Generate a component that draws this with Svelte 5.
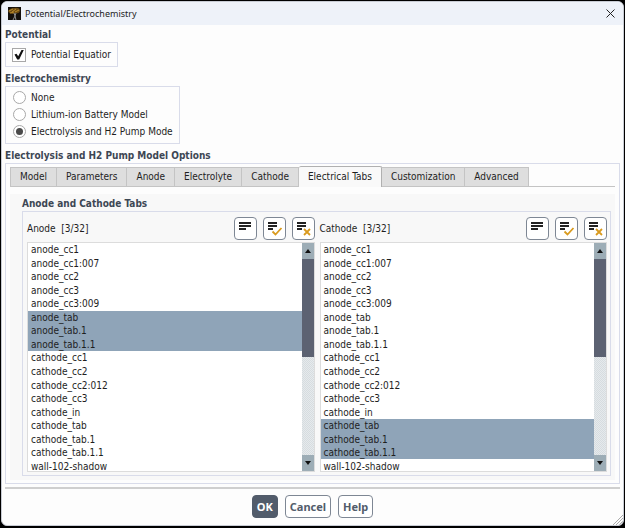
<script>
  const tabs = ['Model', 'Parameters', 'Anode', 'Electrolyte', 'Cathode', 'Electrical Tabs', 'Customization', 'Advanced'];
  let activeTab = $state('Electrical Tabs');

  let potential = $state(true);
  let model = $state('electrolysis');
  const models = [
    { id: 'none', label: 'None' },
    { id: 'battery', label: 'Lithium-ion Battery Model' },
    { id: 'electrolysis', label: 'Electrolysis and H2 Pump Mode' },
  ];

  const zones = [
    'anode_cc1', 'anode_cc1:007', 'anode_cc2', 'anode_cc3', 'anode_cc3:009',
    'anode_tab', 'anode_tab.1', 'anode_tab.1.1',
    'cathode_cc1', 'cathode_cc2', 'cathode_cc2:012', 'cathode_cc3', 'cathode_in',
    'cathode_tab', 'cathode_tab.1', 'cathode_tab.1.1', 'wall-102-shadow',
  ];
  const total = 32;

  let lists = $state([
    { name: 'Anode', selected: ['anode_tab', 'anode_tab.1', 'anode_tab.1.1'] },
    { name: 'Cathode', selected: ['cathode_tab', 'cathode_tab.1', 'cathode_tab.1.1'] },
  ]);

  function toggle(list, zone) {
    if (list.selected.includes(zone)) {
      list.selected = list.selected.filter((z) => z !== zone);
    } else {
      list.selected = [...list.selected, zone];
    }
  }
</script>

<div class="window">
  <header class="titlebar">
    <svg class="logo" width="13" height="13" viewBox="0 0 13 13" aria-hidden="true">
      <rect width="13" height="13" fill="#14100c" />
      <path d="M0 4 Q2 1 6 1 Q12 0 12 4 Q11 7 8 6 L5 7 Q1 7 0 4Z" fill="#6b4a12" />
      <path d="M1 4 L5 2 M4 5 L8 2 M7 5 L11 3 M2 6 L6 5" stroke="#b98a2c" fill="none" />
      <path d="M6 6 L7 9 L5 13 M8 6 L7 9 L8 13" stroke="#8f8f8f" fill="none" />
    </svg>
    <h1>Potential/Electrochemistry</h1>
    <button class="close" aria-label="Close">
      <svg width="9" height="9" viewBox="0 0 9 9"><path d="M0.5 0.5 L8.5 8.5 M8.5 0.5 L0.5 8.5" stroke="#222" fill="none" /></svg>
    </button>
  </header>

  <main>
    <section>
      <h2>Potential</h2>
      <div class="group fit check-group">
        <label><input type="checkbox" bind:checked={potential} /><span>Potential Equatior</span></label>
      </div>
    </section>

    <section>
      <h2>Electrochemistry</h2>
      <div class="group fit radio-group">
        {#each models as m}
          <label><input type="radio" name="model" value={m.id} bind:group={model} /><span>{m.label}</span></label>
        {/each}
      </div>
    </section>

    <section>
      <h2>Electrolysis and H2 Pump Model Options</h2>
      <div class="group options">
        <div class="tabs" role="tablist">
          {#each tabs as tab}
            <button role="tab" class:active={tab === activeTab} aria-selected={tab === activeTab} onclick={() => (activeTab = tab)}>{tab}</button>
          {/each}
        </div>

        <div class="panel">
          <h2>Anode and Cathode Tabs</h2>
          <div class="group lists">
            {#each lists as list}
              <div class="column">
                <div class="list-head">
                  <span class="list-name">{list.name}&nbsp; [{list.selected.length}/{total}]</span>
                  <button class="tool" aria-label="Filter {list.name}">
                    <svg width="21" height="21" viewBox="0 0 21 21"><path d="M4 5h12M4 8h12M4 11h7" stroke="#222" stroke-width="1.8" /></svg>
                  </button>
                  <button class="tool" aria-label="Select all in {list.name}" onclick={() => (list.selected = [...zones])}>
                    <svg width="21" height="21" viewBox="0 0 21 21"><path d="M4 5h9M4 8h9M4 11h5" stroke="#222" stroke-width="1.8" /><path d="M8.5 13.5l3 3 6-6.500" fill="none" stroke="#d99a1e" stroke-width="1.8" /></svg>
                  </button>
                  <button class="tool" aria-label="Deselect all in {list.name}" onclick={() => (list.selected = [])}>
                    <svg width="21" height="21" viewBox="0 0 21 21"><path d="M4 5h9M4 8h9M4 11h5" stroke="#222" stroke-width="1.8" /><path d="M11 11l6 6M17 11l-6 6" stroke="#d99a1e" stroke-width="1.8" /></svg>
                  </button>
                </div>
                <div class="listbox">
                  <div class="view">
                    <ul role="listbox" aria-label={list.name} aria-multiselectable="true">
                      {#each zones as zone}
                        <li role="option" aria-selected={list.selected.includes(zone)}>
                          <button class:selected={list.selected.includes(zone)} onclick={() => toggle(list, zone)}>{zone}</button>
                        </li>
                      {/each}
                    </ul>
                  </div>
                  <div class="scrollbar">
                    <button aria-label="Scroll up"><svg width="6" height="4" viewBox="0 0 6 4"><path d="M0 4 L3 0 L6 4Z" fill="#111" /></svg></button>
                    <div class="track"><div class="thumb"></div></div>
                    <button aria-label="Scroll down"><svg width="6" height="4" viewBox="0 0 6 4"><path d="M0 0 L3 4 L6 0Z" fill="#111" /></svg></button>
                  </div>
                </div>
              </div>
            {/each}
          </div>
        </div>
      </div>
    </section>
  </main>

  <footer>
    <button class="primary">OK</button>
    <button>Cancel</button>
    <button>Help</button>
    <svg class="grip" width="10" height="10" viewBox="0 0 10 10" aria-hidden="true"><path d="M0 10 L10 0 M3 10 L10 3 M6 10 L10 6" stroke="#aaa" fill="none" /></svg>
  </footer>
</div>

<style>
  :global(body) {
    background: #000;
  }

  .window {
    margin: 1px;
    background: #fdfdfd;
    border: 1px solid #c8ccd4;
    border-radius: 6px;
    overflow: hidden;
    box-sizing: border-box;
    font-family: "DejaVu Sans Condensed", "Noto Sans", sans-serif;
    font-size: 10px;
    line-height: 14px;
    color: #1e1e1e;
  }

  button {
    font: inherit;
    color: inherit;
    padding: 0;
    margin: 0;
    border: none;
    background: none;
    cursor: pointer;
  }

  svg {
    display: block;
  }

  h1, h2 {
    margin: 0;
    font-size: 10px;
  }

  h1 {
    flex: 1;
    font-family: "Noto Sans", sans-serif;
    font-size: 9px;
    font-weight: normal;
  }

  h2 {
    line-height: 14px;
    color: #3d4754;
  }

  .titlebar {
    display: flex;
    align-items: center;
    gap: 4px;
    height: 23px;
    padding: 0 6px;
    background: #eef2f9;
  }

  .close {
    padding: 2px;
  }

  main {
    display: flex;
    flex-direction: column;
    gap: 5px;
    padding: 3px;
  }

  .group {
    border: 1px solid #d9dcea;
    box-sizing: border-box;
  }

  .fit {
    width: fit-content;
  }

  .check-group {
    padding: 3px 6px;
  }

  .radio-group {
    padding: 2px 6px 3px 7px;
  }

  label {
    display: flex;
    align-items: center;
    gap: 5px;
    height: 17px;
  }

  input {
    appearance: none;
    margin: 0;
    width: 14px;
    height: 14px;
    box-sizing: border-box;
    border: 1px solid #a8a8a8;
    background: #fff;
    display: grid;
    place-items: center;
  }

  input[type='radio'] {
    width: 13px;
    height: 13px;
    border-radius: 50%;
  }

  input[type='radio']:checked::before {
    content: '';
    width: 7px;
    height: 7px;
    border-radius: 50%;
    background: #4a4a4a;
  }

  input[type='checkbox']:checked::before {
    content: '';
    width: 10px;
    height: 10px;
    background: #111;
    clip-path: polygon(5% 50%, 25% 42%, 42% 68%, 78% 0, 100% 0, 52% 100%, 32% 100%);
  }

  .options {
    padding: 2px 4px 3px;
  }

  .tabs {
    display: flex;
    align-items: flex-end;
    border-bottom: 1px solid #c4c4c4;
  }

  .tabs button {
    height: 19px;
    padding: 0 9px;
    background: #dedede;
    border: 1px solid #c4c4c4;
    border-left-width: 0;
    border-bottom: none;
    white-space: nowrap;
  }

  .tabs button:first-child {
    border-left-width: 1px;
  }

  .tabs button.active {
    height: 21px;
    margin-bottom: -1px;
    background: #f9f9f9;
    border-color: #b0b0b0;
    border-radius: 2px 2px 0 0;
  }

  .panel {
    margin-top: 7px;
    padding: 3px 4px 4px 12px;
    background: #f8f8f8;
  }

  .lists {
    display: flex;
    gap: 5px;
    padding: 5px 3px 3px 4px;
  }

  .column {
    flex: 1;
    min-width: 0;
  }

  .list-head {
    display: flex;
    align-items: center;
    gap: 6px;
    margin-bottom: 2px;
  }

  .list-name {
    flex: 1;
  }

  .tool {
    width: 23px;
    height: 23px;
    background: #fff;
    border: 1px solid #7e8794;
    border-radius: 4px;
    overflow: hidden;
  }

  .listbox {
    display: flex;
    height: 230px;
    box-sizing: border-box;
    border: 1px solid #dcdcdc;
    background: #fff;
  }

  .view {
    flex: 1;
    overflow: hidden;
  }

  ul {
    display: grid;
    grid-auto-rows: 1fr;
    height: 230px;
    margin: 0;
    padding: 0;
    list-style: none;
  }

  li {
    display: grid;
    min-height: 0;
  }

  li button {
    padding: 0 3px;
    line-height: 13px;
    text-align: left;
  }

  .selected {
    background: #8fa4b8;
  }

  .scrollbar {
    display: flex;
    flex-direction: column;
    width: 12px;
  }

  .scrollbar button {
    display: grid;
    place-items: center;
    height: 16px;
    background: #9dadb6;
  }

  .track {
    flex: 1;
    background: repeating-conic-gradient(#d6dce0 0 25%, #e6eaec 0 50%) 0 0 / 2px 2px;
  }

  .thumb {
    height: 50%;
    background: #5c6272;
  }

  footer {
    position: relative;
    display: flex;
    justify-content: center;
    gap: 7px;
    margin: 0 3px;
    padding: 6px 0 7px;
    border-top: 2px solid #cfcfcf;
  }

  footer button {
    height: 23px;
    padding: 0 4px;
    border: 1px solid #7e8794;
    border-radius: 4px;
    background: #fff;
    color: #525c6b;
    font-family: "Noto Sans", sans-serif;
    font-size: 11px;
    font-weight: bold;
  }

  footer .primary {
    background: #525c6b;
    border-color: #525c6b;
    color: #fff;
  }

  .grip {
    position: absolute;
    right: -3px;
    bottom: 0;
  }
</style>
